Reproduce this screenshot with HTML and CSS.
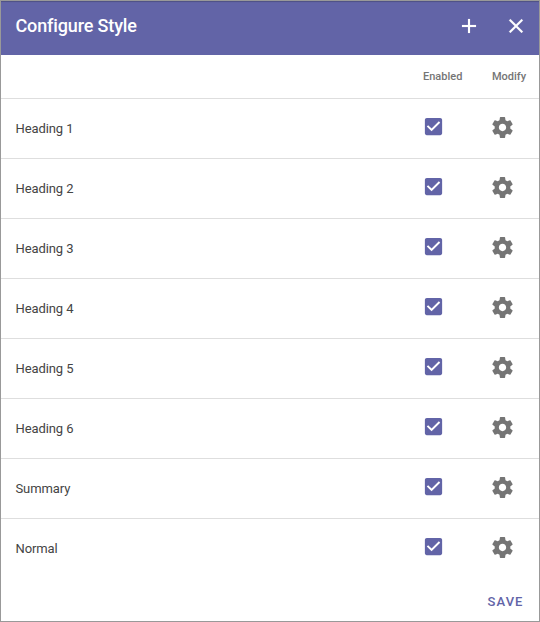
FILE: index.html
```
<!DOCTYPE html>
<html lang="en">
<head>
<meta charset="utf-8">
<title>Configure Style</title>
<link rel="stylesheet" href="styles.css">
</head>
<body>
<svg class="defs" aria-hidden="true">
  <symbol id="check" viewBox="0 0 24 24"><path d="M19 3H5c-1.11 0-2 .9-2 2v14c0 1.1.89 2 2 2h14c1.11 0 2-.9 2-2V5c0-1.1-.89-2-2-2zm-9 14l-5-5 1.41-1.41L10 14.17l7.59-7.59L19 8l-9 9z"/></symbol>
  <symbol id="gear" viewBox="0 0 24 24"><path d="M19.43 12.98c.04-.32.07-.64.07-.98s-.03-.66-.07-.98l2.11-1.65c.19-.15.24-.42.12-.64l-2-3.46c-.12-.22-.39-.3-.61-.22l-2.49 1c-.52-.4-1.08-.73-1.69-.98l-.38-2.65C14.46 2.18 14.25 2 14 2h-4c-.25 0-.46.18-.49.42l-.38 2.65c-.61.25-1.17.59-1.69.98l-2.49-1c-.23-.09-.49 0-.61.22l-2 3.46c-.13.22-.07.49.12.64l2.11 1.65c-.04.32-.07.65-.07.98s.03.66.07.98l-2.11 1.65c-.19.15-.24.42-.12.64l2 3.46c.12.22.39.3.61.22l2.49-1c.52.4 1.08.73 1.69.98l.38 2.65c.03.24.24.42.49.42h4c.25 0 .46-.18.49-.42l.38-2.65c.61-.25 1.17-.59 1.69-.98l2.49 1c.23.09.49 0 .61-.22l2-3.46c.12-.22.07-.49-.12-.64l-2.11-1.65zM12 15.5c-1.93 0-3.5-1.57-3.5-3.5s1.57-3.5 3.5-3.5 3.5 1.57 3.5 3.5-1.57 3.5-3.5 3.5z"/></symbol>
</svg>
<main class="dialog">
  <header class="toolbar">
    <h1>Configure Style</h1>
    <svg class="tool" viewBox="0 0 24 24"><path d="M19 13h-6v6h-2v-6H5v-2h6V5h2v6h6v2z"/></svg>
    <svg class="tool" viewBox="0 0 24 24"><path d="M19 6.41L17.59 5 12 10.59 6.41 5 5 6.41 10.59 12 5 17.59 6.41 19 12 13.41 17.59 19 19 17.59 13.41 12z"/></svg>
  </header>
  <div class="row head"><span></span><span>Enabled</span><span>Modify</span></div>
  <div class="row"><span>Heading 1</span><svg class="check"><use href="#check"/></svg><svg class="gear"><use href="#gear"/></svg></div>
  <div class="row"><span>Heading 2</span><svg class="check"><use href="#check"/></svg><svg class="gear"><use href="#gear"/></svg></div>
  <div class="row"><span>Heading 3</span><svg class="check"><use href="#check"/></svg><svg class="gear"><use href="#gear"/></svg></div>
  <div class="row"><span>Heading 4</span><svg class="check"><use href="#check"/></svg><svg class="gear"><use href="#gear"/></svg></div>
  <div class="row"><span>Heading 5</span><svg class="check"><use href="#check"/></svg><svg class="gear"><use href="#gear"/></svg></div>
  <div class="row"><span>Heading 6</span><svg class="check"><use href="#check"/></svg><svg class="gear"><use href="#gear"/></svg></div>
  <div class="row"><span>Summary</span><svg class="check"><use href="#check"/></svg><svg class="gear"><use href="#gear"/></svg></div>
  <div class="row"><span>Normal</span><svg class="check"><use href="#check"/></svg><svg class="gear"><use href="#gear"/></svg></div>
  <footer><button>SAVE</button></footer>
</main>
</body>
</html>
```
FILE: styles.css
```
* { box-sizing: border-box; }
body { margin: 0; font-family: Roboto, sans-serif; background: #fff; }
.defs { display: none; }
.dialog { height: 622px; border: 1px solid #999; overflow: hidden; }
.toolbar { display: flex; align-items: center; height: 54px; padding: 0 11px 4px 14.5px; background: #6264a7; color: #fff; box-shadow: inset 0 2px 1px -1px rgba(0, 0, 0, .2); }
.toolbar h1 { flex: 1; margin: 0; padding-bottom: 2px; font-size: 18px; font-weight: 500; letter-spacing: -.14px; }
.tool { width: 24px; height: 24px; fill: #fff; stroke: #fff; stroke-width: .15; }
.tool + .tool { margin-left: 23px; }
.row { display: grid; grid-template-columns: 407px 69px 1fr; align-items: center; height: 60px; padding-left: 14.5px; border-top: 1px solid #dedede; font-size: 13px; letter-spacing: -.1px; color: #444; }
.head { height: 43px; border-top: 0; padding-left: 15px; font-size: 11px; font-weight: 500; letter-spacing: 0; color: #757575; }
.check { width: 23px; height: 23px; margin: 0 0 4px -1px; fill: #6264a7; }
.gear { width: 25px; height: 25px; margin: 0 0 2px -1.5px; fill: #757575; }
footer { display: flex; justify-content: flex-end; padding: 16px 15.5px 0; }
button { padding: 0; border: 0; background: none; font: 500 13px/16px Roboto, sans-serif; letter-spacing: 1.05px; color: #6264a7; }
```
